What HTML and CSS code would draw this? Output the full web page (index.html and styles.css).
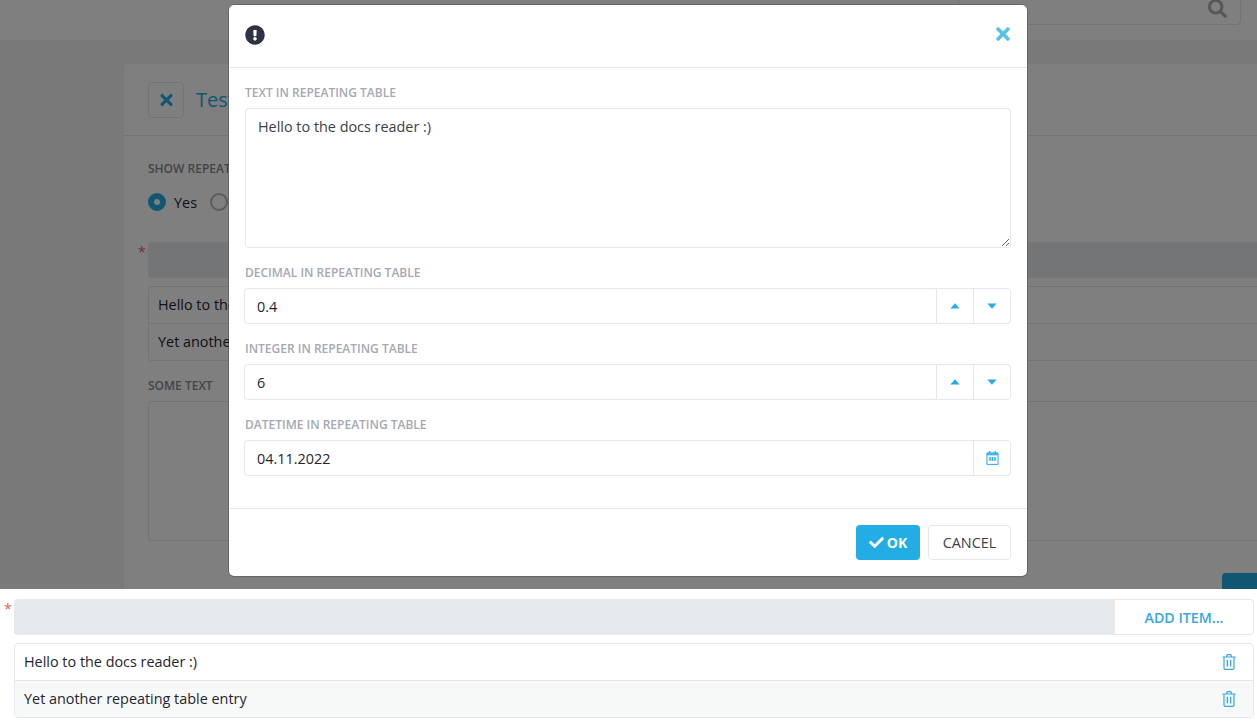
FILE: index.html
```html
<!DOCTYPE html>
<html lang="en">
<head>
    <meta charset="UTF-8">
    <meta name="viewport" content="width=device-width, initial-scale=1.0">
    <title>Repeating table</title>
    <link rel="stylesheet" href="styles.css">
</head>
<body>
    <svg class="defs" width="0" height="0">
        <symbol id="i-times" viewBox="0 0 352 512"><path d="M242.72 256l100.07-100.07c12.28-12.28 12.28-32.19 0-44.48l-22.24-22.24c-12.28-12.28-32.19-12.28-44.48 0L176 189.28 75.93 89.21c-12.28-12.28-32.19-12.28-44.48 0L9.21 111.45c-12.28 12.28-12.28 32.19 0 44.48L109.28 256 9.21 356.07c-12.28 12.28-12.28 32.19 0 44.48l22.24 22.24c12.28 12.28 32.2 12.28 44.48 0L176 322.72l100.07 100.07c12.28 12.28 32.2 12.28 44.48 0l22.24-22.24c12.28-12.28 12.28-32.19 0-44.48L242.72 256z"/></symbol>
        <symbol id="i-up" viewBox="0 0 10 6"><path d="M5 .3 9.6 5.6H.4z"/></symbol>
        <symbol id="i-down" viewBox="0 0 10 6"><path d="M5 5.7.4.4h9.2z"/></symbol>
        <symbol id="i-trash" viewBox="0 0 14 16"><path fill="none" stroke="currentColor" stroke-width="1.2" d="M.4 3h13.2M2 3v11c0 .8.5 1.4 1.200 1.400h7.600c.7 0 1.200-.6 1.200-1.400V3M4.400 3 5 1c.1-.3.3-.4.6-.4h2.800c.3 0 .5.1.6.4l.6 2"/><path fill="currentColor" d="M4.700 5.800h1.400v6.800H4.700zM7.900 5.800h1.400v6.800H7.900z"/></symbol>
    </svg>

    <div class="top">
        <div class="page">
            <div class="topbar">
                <div class="search">
                    <span class="search-text">Search</span>
                    <svg class="search-icon" viewBox="0 0 512 512"><path d="M505 442.7L405.3 343c-4.5-4.5-10.6-7-17-7H372c27.6-35.3 44-79.7 44-128C416 93.1 322.9 0 208 0S0 93.1 0 208s93.1 208 208 208c48.3 0 92.7-16.4 128-44v16.3c0 6.4 2.5 12.5 7 17l99.7 99.7c9.4 9.4 24.6 9.4 33.9 0l28.3-28.3c9.4-9.4 9.4-24.6.1-34zM208 336c-70.7 0-128-57.2-128-128 0-70.7 57.2-128 128-128 70.7 0 128 57.2 128 128 0 70.7-57.2 128-128 128z"/></svg>
                </div>
            </div>
            <div class="card">
                <div class="card-head">
                    <span class="close-box"><svg class="close-icon"><use href="#i-times"/></svg></span>
                    <span class="card-title">Test</span>
                </div>
                <div class="card-body">
                    <div class="label dark">SHOW REPEATING TABLE</div>
                    <div class="radios">
                        <span class="radio on"></span><span>Yes</span>
                        <span class="radio"></span><span>No</span>
                    </div>
                    <div class="bar-row page-bar">
                        <span class="star">*</span>
                        <div class="bar"></div>
                    </div>
                    <div class="rows page-rows">
                        <div class="row">Hello to the docs reader :)</div>
                        <div class="row">Yet another repeating table entry</div>
                    </div>
                    <div class="label dark">SOME TEXT</div>
                    <div class="page-area"></div>
                    <div class="page-actions"><span class="page-btn"></span></div>
                </div>
            </div>
        </div>

        <div class="overlay"></div>

        <div class="modal">
            <div class="modal-head">
                <svg class="alert-icon" viewBox="0 0 512 512"><path d="M504 256c0 136.997-111.043 248-248 248S8 392.997 8 256C8 119.083 119.043 8 256 8s248 111.083 248 248zm-248 50c-25.405 0-46 20.595-46 46s20.595 46 46 46 46-20.595 46-46-20.595-46-46-46zm-43.673-165.346l7.418 136c.347 6.364 5.609 11.346 11.982 11.346h48.546c6.373 0 11.635-4.982 11.982-11.346l7.418-136c.375-6.874-5.098-12.654-11.982-12.654h-63.383c-6.884 0-12.356 5.78-11.981 12.654z"/></svg>
                <svg class="modal-close"><use href="#i-times"/></svg>
            </div>
            <div class="modal-body">
                <div class="label">TEXT IN REPEATING TABLE</div>
                <textarea class="area">Hello to the docs reader :)</textarea>

                <div class="label">DECIMAL IN REPEATING TABLE</div>
                <div class="field">
                    <input class="field-input" type="text" value="0.4">
                    <span class="field-btn"><svg class="caret"><use href="#i-up"/></svg></span>
                    <span class="field-btn"><svg class="caret"><use href="#i-down"/></svg></span>
                </div>

                <div class="label">INTEGER IN REPEATING TABLE</div>
                <div class="field">
                    <input class="field-input" type="text" value="6">
                    <span class="field-btn"><svg class="caret"><use href="#i-up"/></svg></span>
                    <span class="field-btn"><svg class="caret"><use href="#i-down"/></svg></span>
                </div>

                <div class="label">DATETIME IN REPEATING TABLE</div>
                <div class="field">
                    <input class="field-input" type="text" value="04.11.2022">
                    <span class="field-btn">
                        <svg class="cal-icon" viewBox="0 0 14 16">
                            <path fill="#3fb5e8" d="M3 0h1.600v1.500H9.400V0H11v1.500h1.500C13.300 1.500 14 2.200 14 3v11.500c0 .8-.7 1.500-1.500 1.500h-11C.7 16 0 15.300 0 14.500V3C0 2.200.7 1.500 1.500 1.500H3z"/>
                            <path fill="#fff" d="M1.300 5h11.400v9.700H1.300z"/>
                            <path fill="#bfe6f7" d="M2.500 6.800h9v4.600h-9z"/>
                            <path d="M3.500 7.200h1.400v3.800H3.500zM6.300 7.200h1.400v3.800H6.300zM9.100 7.200h1.400v3.800H9.100z"/>
                        </svg>
                    </span>
                </div>
            </div>
            <div class="modal-foot">
                <button class="btn btn-ok">
                    <svg class="check-icon" viewBox="0 0 512 512"><path d="M173.898 439.404l-166.4-166.4c-9.997-9.997-9.997-26.206 0-36.204l36.203-36.204c9.997-9.998 26.207-9.998 36.204 0L192 312.69 432.095 72.596c9.997-9.997 26.207-9.997 36.204 0l36.203 36.204c9.997 9.997 9.997 26.206 0 36.204l-294.4 294.401c-9.998 9.997-26.207 9.997-36.204-.001z"/></svg>
                    OK
                </button>
                <button class="btn btn-cancel">CANCEL</button>
            </div>
        </div>
    </div>

    <div class="bottom">
        <div class="bar-row">
            <span class="star">*</span>
            <div class="bar"></div>
            <button class="add-btn">ADD ITEM...</button>
        </div>
        <div class="rows">
            <div class="row">
                <span>Hello to the docs reader :)</span>
                <svg class="trash"><use href="#i-trash"/></svg>
            </div>
            <div class="row alt">
                <span>Yet another repeating table entry</span>
                <svg class="trash"><use href="#i-trash"/></svg>
            </div>
        </div>
    </div>
</body>
</html>
```

FILE: styles.css
```css
* {
    box-sizing: border-box;
}
html, body {
    height: 100%;
}
body {
    margin: 0;
    background: #fff;
    font-family: "Open Sans", "Liberation Sans", sans-serif;
    font-size: 14.4px;
    font-kerning: none;
    color: #1f2530;
    overflow: hidden;
}
.defs {
    position: absolute;
}

/* dimmed page behind the dialog */
.top {
    position: relative;
    height: 589px;
    overflow: hidden;
}
.page {
    height: 100%;
    background: #f2f3f5;
}
.topbar {
    height: 40px;
    background: #fff;
    display: flex;
    justify-content: flex-end;
    padding-right: 16px;
}
.search {
    width: 283px;
    height: 26px;
    margin-top: -1px;
    border: 1px solid #e3e7ef;
    border-radius: 0 0 4px 4px;
    display: flex;
    justify-content: space-between;
    padding: 0 13px 0 12px;
}
.search-text {
    margin-top: -16px;
    color: #3a3f4b;
}
.search-icon {
    width: 19px;
    height: 19px;
    margin-top: -1px;
    fill: #aaadb3;
}
.card {
    margin: 24px 0 0 124px;
    height: 540px;
    background: #fff;
    border-radius: 4px 0 0 0;
    box-shadow: -1px 0 0 #eceef1;
}
.card-head {
    height: 72px;
    border-bottom: 1px solid #e3e7ef;
    padding: 18px 24px;
    display: flex;
    align-items: center;
    gap: 12px;
}
.close-box {
    width: 36px;
    height: 36px;
    border: 1px solid #e3e7ef;
    border-radius: 4px;
    display: flex;
    align-items: center;
    justify-content: center;
}
.close-icon {
    width: 13px;
    height: 18px;
    fill: #22ade5;
}
.card-title {
    font-size: 20px;
    color: #22ade5;
}
.card-body {
    padding: 24px 0 0 24px;
}
.label {
    font-size: 12px;
    line-height: 18px;
    margin-bottom: -2px;
    font-weight: 600;
    color: #a4a9b3;
}
.label.dark {
    color: #858994;
}
.radios {
    display: flex;
    align-items: center;
    gap: 8px;
    height: 18px;
    margin-top: 17px;
}
.radio {
    width: 18px;
    height: 18px;
    border: 2px solid #b4b7bd;
    border-radius: 50%;
    margin-left: 5px;
}
.radio.on {
    margin-left: 0;
    border: 6px solid #22ade5;
    background: #fff;
}
.bar-row {
    position: relative;
    display: flex;
    height: 36px;
}
.star {
    position: absolute;
    left: -10px;
    top: 0;
    color: #f25b5b;
    font-size: 14px;
    line-height: 20px;
}
.bar {
    flex: 1;
    background: #e7eaed;
    border-radius: 4px 0 0 4px;
}
.page-bar {
    margin-top: 31px;
}
.rows {
    margin-top: 8px;
    border: 1px solid #e3e7ef;
    border-radius: 4px;
}
.page-rows {
    border-right: 0;
    border-radius: 4px 0 0 4px;
    margin-bottom: 16px;
}
.row {
    height: 36px;
    padding: 0 17px 2px 9px;
    display: flex;
    align-items: center;
    justify-content: space-between;
}
.row + .row {
    height: 37px;
    border-top: 1px solid #e3e7ef;
}
.row.alt {
    background: #f7f9f9;
}
.page-area {
    height: 140px;
    margin-top: 8px;
    border: 1px solid #e3e7ef;
    border-right: 0;
    border-radius: 4px 0 0 4px;
}
.page-actions {
    display: flex;
    justify-content: flex-end;
    margin-top: 32px;
}
.page-btn {
    width: 35px;
    height: 36px;
    background: #22ade5;
    border-radius: 4px 0 0 0;
}
.overlay {
    position: absolute;
    inset: 0;
    background: rgba(0, 0, 0, .5);
}

/* dialog */
.modal {
    position: absolute;
    left: 229px;
    top: 5px;
    width: 798px;
    height: 571px;
    background: #fff;
    border-radius: 5px;
    box-shadow: 0 0 0 1px rgba(60, 60, 60, .35);
    display: flex;
    flex-direction: column;
    padding-left: 1px;
}
.modal-head {
    height: 63px;
    flex: none;
    border-bottom: 1px solid #e3e7ef;
    display: flex;
    align-items: center;
    justify-content: space-between;
    padding: 0 17px 2px 15px;
}
.alert-icon {
    width: 20px;
    height: 20px;
    fill: #2d3244;
}
.modal-close {
    width: 14px;
    height: 20px;
    margin-top: -3px;
    fill: #58c3ea;
}
.modal-body {
    flex: 1;
    padding: 16px 16px 0 15px;
}
.area {
    display: block;
    width: 100%;
    height: 140px;
    margin: 8px 0 16px;
    padding: 8px 12px;
    border: 1px solid #e3e7ef;
    border-radius: 4px;
    font: inherit;
    font-kerning: none;
    line-height: 20px;
    color: #3a3f4b;
    outline: none;
}
.field {
    display: flex;
    height: 36px;
    margin: 8px 0 16px -1px;
    border: 1px solid #e3e7ef;
    border-radius: 4px;
}
.field-input {
    flex: 1;
    min-width: 0;
    border: 0;
    padding: 0 12px;
    font: inherit;
    font-kerning: none;
    color: #1f2530;
    background: transparent;
    outline: none;
}
.field-btn {
    width: 37px;
    flex: none;
    border-left: 1px solid #e3e7ef;
    display: flex;
    align-items: center;
    justify-content: center;
}
.caret {
    width: 10px;
    height: 6px;
    fill: #22ade5;
}
.cal-icon {
    width: 13px;
    height: 14px;
    fill: #22ade5;
}
.modal-foot {
    height: 68px;
    flex: none;
    border-top: 1px solid #e3e7ef;
    padding: 16px 16px 0;
    display: flex;
    justify-content: flex-end;
    gap: 8px;
}
.btn {
    height: 35px;
    border-radius: 4px;
    font-family: inherit;
    font-size: 14.4px;
    font-kerning: none;
    cursor: pointer;
}
.btn-ok {
    width: 64px;
    padding: 0;
    border: 0;
    background: #22ade5;
    color: #fff;
    font-size: 14px;
    font-weight: 700;
    display: flex;
    align-items: center;
    justify-content: center;
    gap: 3px;
}
.check-icon {
    width: 15px;
    height: 15px;
    fill: #fff;
}
.btn-cancel {
    width: 83px;
    padding: 0;
    border: 1px solid #e3e7ef;
    background: #fff;
    color: #3a3f4b;
    font-weight: 400;
}

/* repeating table, undimmed */
.bottom {
    padding: 10px 3px 0 14px;
}
.add-btn {
    width: 139px;
    border: 1px solid #e3e7ef;
    border-left: 0;
    border-radius: 0 4px 4px 0;
    background: #fff;
    color: #35a8e4;
    font-family: inherit;
    font-size: 14.2px;
    font-weight: 600;
    cursor: pointer;
}
.trash {
    width: 14px;
    height: 16px;
    margin-top: 1px;
    color: #35a8e4;
}
```
